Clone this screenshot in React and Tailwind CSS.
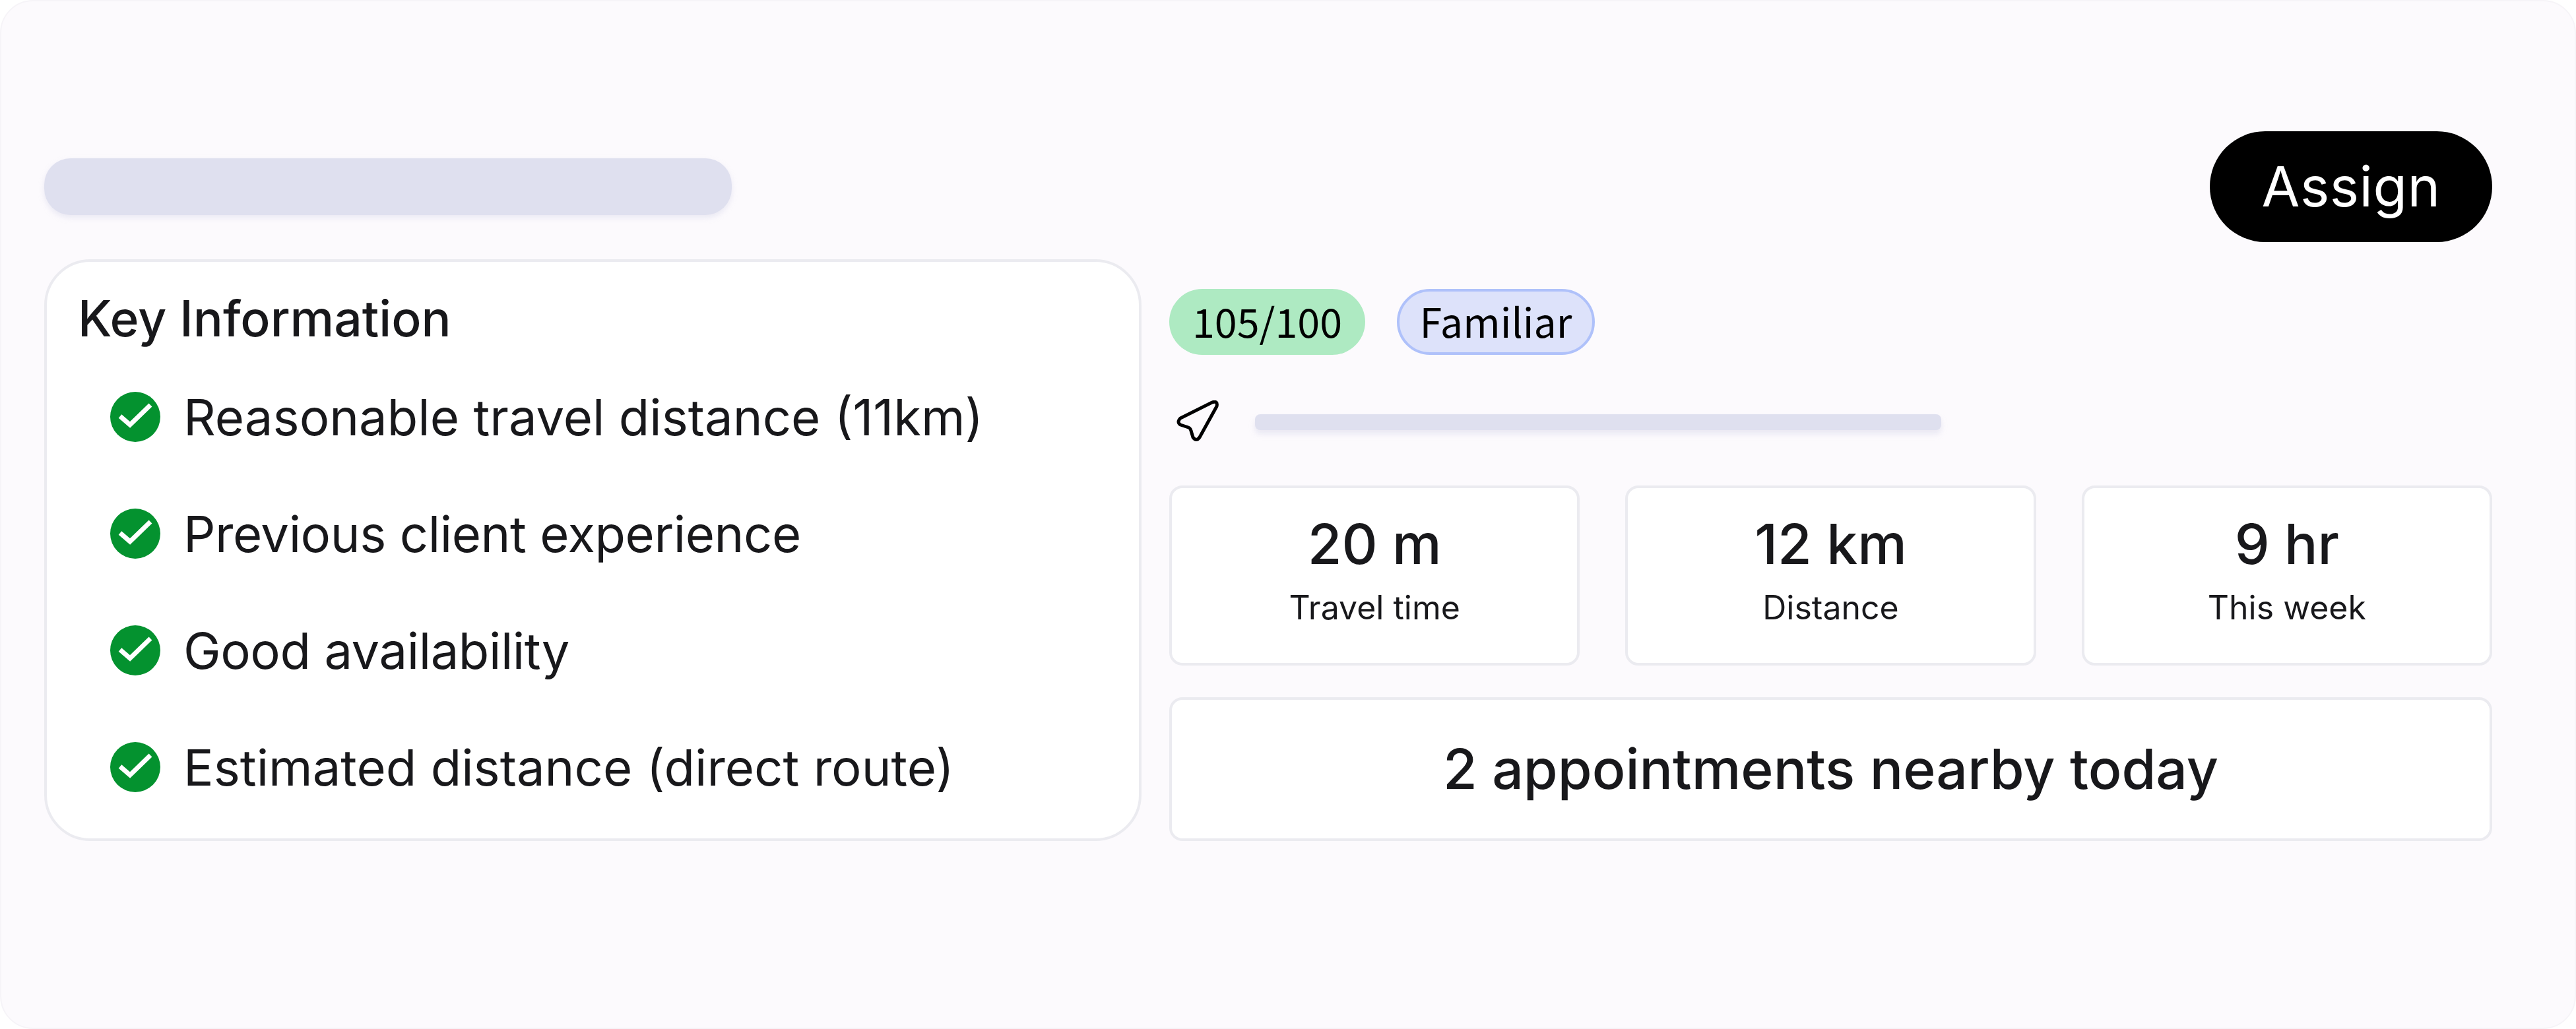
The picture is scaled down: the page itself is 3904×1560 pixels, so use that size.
import React from 'react';

const reasons = [
  { text: 'Reasonable travel distance (11km)', tracking: 'tracking-normal' },
  { text: 'Previous client experience', tracking: 'tracking-[-0.45px]' },
  { text: 'Good availability', tracking: 'tracking-[-0.45px]' },
  { text: 'Estimated distance (direct route)', tracking: 'tracking-normal' },
];

const stats = [
  { value: '20 m', label: 'Travel time' },
  { value: '12 km', label: 'Distance' },
  { value: '9 hr', label: 'This week' },
];

const CheckBadge = () => (
  <svg width="76" height="76" viewBox="0 0 76 76" className="shrink-0">
    <circle cx="38" cy="38" r="38" fill="#04922f" />
    <path d="M15 37 L30 50 L61 20" fill="none" stroke="#ffffff" strokeWidth="7" />
  </svg>
);

const NavArrow = () => (
  <svg width="66" height="62" viewBox="0 0 66 62" className="shrink-0">
    <path
      d="M55 3 L7 27 Q1 33 7 37 L19 41 Q22 42 23 46 L26 56 Q31 63 36 56 L62 9 Q64 0 55 3 Z"
      fill="none"
      stroke="#000000"
      strokeWidth="5"
      strokeLinejoin="round"
    />
  </svg>
);

const App = () => {
  return (
    <div className="w-[3904px] h-[1560px] bg-white font-['Inter',sans-serif] text-[#18181b]">
      <div className="w-full h-full bg-[#fcfafd] rounded-[50px] border-2 border-[#f6f4f8] pt-[197px] pl-[65px] pr-[125px]">
        {/* Header */}
        <div className="flex items-center justify-between">
          <div className="w-[1042px] h-[86px] rounded-[40px] bg-[#dfe0ef] shadow-[0_4px_8px_rgba(200,200,225,0.35)]" />
          <button className="w-[428px] h-[168px] rounded-full bg-black text-white text-[84px] tracking-[0.5px]">
            Assign
          </button>
        </div>

        <div className="flex gap-[42px] mt-[26px]">
          {/* Key information */}
          <div className="w-[1663px] h-[882px] shrink-0 rounded-[70px] bg-white border-4 border-[#ebebf0] pt-[42px] pl-[47px]">
            <h2 className="text-[75px] leading-[88px] font-medium">Key Information</h2>
            <ul className="flex flex-col gap-[101px] mt-[67px] pl-[49px]">
              {reasons.map((reason) => (
                <li key={reason.text} className={`flex items-center gap-[35px] h-[76px] text-[76px] ${reason.tracking}`}>
                  <CheckBadge />
                  <span>{reason.text}</span>
                </li>
              ))}
            </ul>
          </div>

          {/* Right column */}
          <div className="flex-1 flex flex-col pt-[45px]">
            <div className="flex gap-[48px] font-['Noto_Sans_CJK_SC','Noto_Sans',sans-serif] text-[61px] text-black">
              <span className="w-[297px] h-[100px] pb-[4px] rounded-full bg-[#aeeac2] flex items-center justify-center">
                105/100
              </span>
              <span className="w-[300px] h-[100px] pb-[4px] rounded-full bg-[#dde2fa] border-4 border-[#afc1fa] flex items-center justify-center">
                Familiar
              </span>
            </div>

            <div className="flex items-center gap-[54px] h-[62px] mt-[69px] pl-[10px]">
              <NavArrow />
              <div className="w-[1040px] h-[24px] mt-[4px] rounded-[8px] bg-[#dfe0ef] shadow-[0_6px_8px_rgba(200,200,225,0.35)]" />
            </div>

            <div className="grid grid-cols-3 gap-[69px] mt-[67px]">
              {stats.map((stat) => (
                <div
                  key={stat.label}
                  className="h-[273px] rounded-[20px] bg-white border-4 border-[#ebebf0] flex flex-col items-center pt-[35px]"
                >
                  <span className="text-[84px] leading-[100px] font-medium">{stat.value}</span>
                  <span className="text-[50px] leading-[60px] mt-[16px]">{stat.label}</span>
                </div>
              ))}
            </div>

            <div className="h-[218px] mt-[48px] rounded-[20px] bg-white border-4 border-[#ebebf0] flex items-center justify-center text-[84px] font-medium">
              2 appointments nearby today
            </div>
          </div>
        </div>
      </div>
    </div>
  );
};

export default App;
